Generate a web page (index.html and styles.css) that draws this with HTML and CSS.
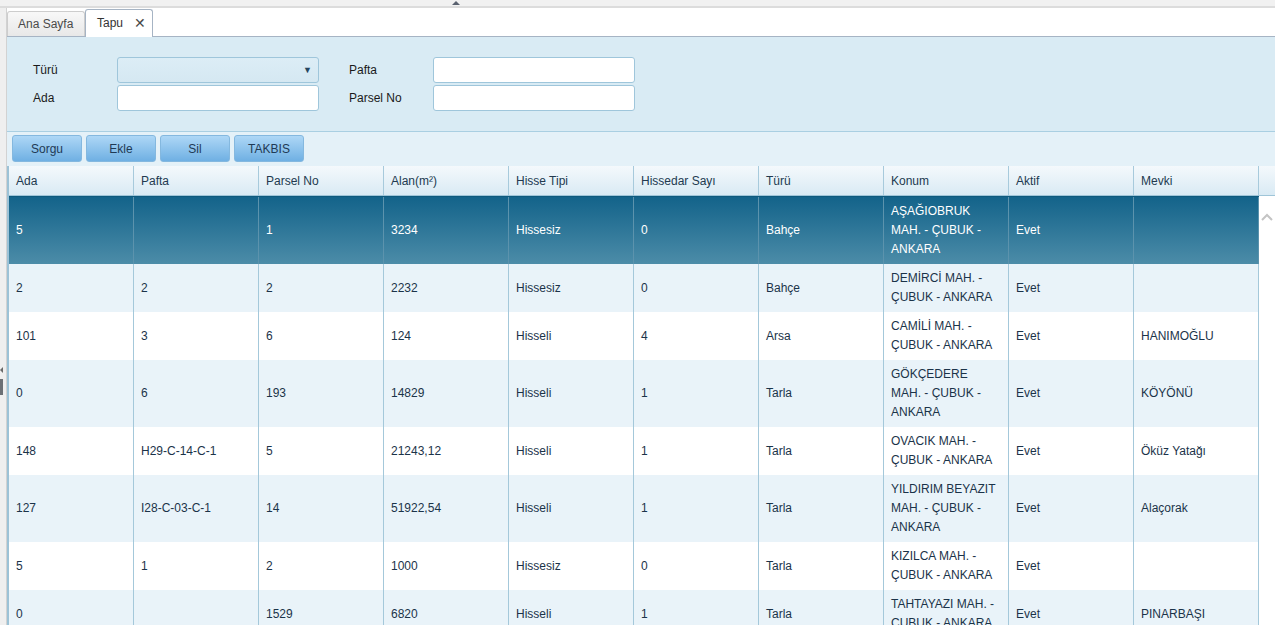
FILE: index.html
```html
<!DOCTYPE html>
<html lang="tr">
<head>
<meta charset="utf-8">
<title>Tapu</title>
<link rel="stylesheet" href="styles.css">
</head>
<body>
<div class="topbar"><span class="topbar-arrow"></span></div>
<div class="main">
  <div class="leftstrip"><span class="ls-arrow"></span><span class="ls-handle"></span></div>
  <div class="content">
    <div class="tabbar">
      <div class="tab">Ana Sayfa</div>
      <div class="tab active">Tapu <span class="close">✕</span></div>
    </div>
    <div class="panel">
      <div class="form">
        <div class="form-grid">
          <label class="lbl">Türü</label>
          <div class="field select"><span class="caret">▼</span></div>
          <span></span>
          <label class="lbl">Pafta</label>
          <div class="field"></div>
          <label class="lbl">Ada</label>
          <div class="field"></div>
          <span></span>
          <label class="lbl">Parsel No</label>
          <div class="field"></div>
        </div>
      </div>
      <div class="toolbar">
        <button class="btn">Sorgu</button>
        <button class="btn">Ekle</button>
        <button class="btn">Sil</button>
        <button class="btn">TAKBIS</button>
      </div>
      <div class="grid">
        <div class="grid-head">
          <div class="hc">Ada</div><div class="hc">Pafta</div><div class="hc">Parsel No</div><div class="hc">Alan(m²)</div><div class="hc">Hisse Tipi</div><div class="hc">Hissedar Sayı</div><div class="hc">Türü</div><div class="hc">Konum</div><div class="hc">Aktif</div><div class="hc">Mevki</div><div class="hc spacer"></div>
        </div>
        <div class="grid-wrap">
          <div class="grid-body">
            <div class="row sel"><div class="c">5</div><div class="c"></div><div class="c">1</div><div class="c">3234</div><div class="c">Hissesiz</div><div class="c">0</div><div class="c">Bahçe</div><div class="c">AŞAĞIOBRUK MAH. - ÇUBUK - ANKARA</div><div class="c">Evet</div><div class="c"></div></div>
            <div class="row alt"><div class="c">2</div><div class="c">2</div><div class="c">2</div><div class="c">2232</div><div class="c">Hissesiz</div><div class="c">0</div><div class="c">Bahçe</div><div class="c">DEMİRCİ MAH. - ÇUBUK - ANKARA</div><div class="c">Evet</div><div class="c"></div></div>
            <div class="row"><div class="c">101</div><div class="c">3</div><div class="c">6</div><div class="c">124</div><div class="c">Hisseli</div><div class="c">4</div><div class="c">Arsa</div><div class="c">CAMİLİ MAH. - ÇUBUK - ANKARA</div><div class="c">Evet</div><div class="c">HANIMOĞLU</div></div>
            <div class="row alt"><div class="c">0</div><div class="c">6</div><div class="c">193</div><div class="c">14829</div><div class="c">Hisseli</div><div class="c">1</div><div class="c">Tarla</div><div class="c">GÖKÇEDERE MAH. - ÇUBUK - ANKARA</div><div class="c">Evet</div><div class="c">KÖYÖNÜ</div></div>
            <div class="row"><div class="c">148</div><div class="c">H29-C-14-C-1</div><div class="c">5</div><div class="c">21243,12</div><div class="c">Hisseli</div><div class="c">1</div><div class="c">Tarla</div><div class="c">OVACIK MAH. - ÇUBUK - ANKARA</div><div class="c">Evet</div><div class="c">Öküz Yatağı</div></div>
            <div class="row alt"><div class="c">127</div><div class="c">I28-C-03-C-1</div><div class="c">14</div><div class="c">51922,54</div><div class="c">Hisseli</div><div class="c">1</div><div class="c">Tarla</div><div class="c">YILDIRIM BEYAZIT MAH. - ÇUBUK - ANKARA</div><div class="c">Evet</div><div class="c">Alaçorak</div></div>
            <div class="row"><div class="c">5</div><div class="c">1</div><div class="c">2</div><div class="c">1000</div><div class="c">Hissesiz</div><div class="c">0</div><div class="c">Tarla</div><div class="c">KIZILCA MAH. - ÇUBUK - ANKARA</div><div class="c">Evet</div><div class="c"></div></div>
            <div class="row alt"><div class="c">0</div><div class="c"></div><div class="c">1529</div><div class="c">6820</div><div class="c">Hisseli</div><div class="c">1</div><div class="c">Tarla</div><div class="c">TAHTAYAZI MAH. - ÇUBUK - ANKARA</div><div class="c">Evet</div><div class="c">PINARBAŞI</div></div>
          </div>
          <div class="vscroll">
            <svg class="chev" width="12" height="8" viewBox="0 0 12 8"><polyline points="1,7 6,2 11,7" fill="none" stroke="#c4c4c4" stroke-width="2"/></svg>
          </div>
        </div>
      </div>
    </div>
  </div>
</div>
</body>
</html>
```

FILE: styles.css
```css
* { box-sizing: border-box; }
html, body { margin: 0; padding: 0; }
body {
  width: 1275px;
  height: 625px;
  overflow: hidden;
  font-family: "Liberation Sans", Arial, sans-serif;
  font-size: 12px;
  background: #ffffff;
}
.topbar {
  height: 8px;
  background: #f1f1f1;
  border-bottom: 2px solid #dcdcdc;
  display: flex;
  justify-content: flex-start;
}
.topbar-arrow {
  margin-top: 1px;
  margin-left: 452px;
  width: 0;
  height: 0;
  border-left: 4px solid transparent;
  border-right: 4px solid transparent;
  border-bottom: 4px solid #5a6270;
}
.main {
  display: flex;
  height: 617px;
}
.leftstrip {
  width: 7px;
  flex: none;
  background: #efefef;
  border-right: 1px solid #d2d2d2;
  display: flex;
  flex-direction: column;
  align-items: flex-start;
}
.ls-arrow {
  margin-top: 359px;
  width: 0;
  height: 0;
  border-top: 3px solid transparent;
  border-bottom: 3px solid transparent;
  border-right: 3px solid #6a6a6a;
}
.ls-handle {
  margin-top: 6px;
  width: 3px;
  height: 16px;
  background: #6c7075;
}
.content {
  flex: 1;
  display: flex;
  flex-direction: column;
  min-width: 0;
}
.tabbar {
  height: 29px;
  flex: none;
  border-bottom: 1px solid #a6b4c4;
  display: flex;
  align-items: flex-end;
  background: #ffffff;
}
.tab {
  height: 25px;
  width: 78px;
  padding-left: 10px;
  display: flex;
  align-items: center;
  color: #4a4a4a;
  background: linear-gradient(#f8f8f8, #e8e8e8);
  border: 1px solid #cdcdcd;
  border-bottom: none;
  border-radius: 3px 3px 0 0;
}
.tab.active {
  height: 28px;
  width: 68px;
  margin-bottom: -1px;
  padding-left: 11px;
  background: #ffffff;
  border-color: #a6b4c4;
  color: #333333;
  padding-bottom: 1px;
}
.tab .close {
  margin-left: 11px;
  font-size: 14px;
  color: #4a4a4a;
}
.panel {
  flex: 1;
  background: #d9ebf4;
  display: flex;
  flex-direction: column;
  min-height: 0;
}
.form {
  padding: 20px 0 20px 26px;
  border-bottom: 1px solid #a9cfe2;
}
.form-grid {
  display: grid;
  grid-template-columns: 84px 202px 30px 84px 202px;
  grid-template-rows: 26px 26px;
  row-gap: 2px;
  align-items: center;
}
.lbl {
  color: #1a1a1a;
  padding-bottom: 1px;
}
.field {
  height: 26px;
  background: #ffffff;
  border: 1px solid #9fc6db;
  border-radius: 3px;
}
.field.select {
  background: linear-gradient(#dcedf6, #d5e8f2);
  display: flex;
  align-items: center;
  justify-content: flex-end;
  padding-right: 6px;
}
.caret {
  font-size: 9px;
  color: #27465e;
}
.toolbar {
  height: 34px;
  flex: none;
  background: #e4f1f8;
  padding: 3px 0 0 5px;
  display: flex;
  gap: 4px;
  align-items: flex-start;
}
.btn {
  width: 70px;
  height: 27px;
  font-family: inherit;
  font-size: 12px;
  color: #1f3a55;
  border: 1px solid #84b8df;
  border-radius: 3px;
  background: linear-gradient(#aed7f6, #6fb0e3);
  padding: 0;
}
.grid {
  flex: 1;
  display: flex;
  flex-direction: column;
  min-height: 0;
  background: #ffffff;
  border-left: 2px solid #9cc2d6;
}
.grid-head {
  height: 30px;
  flex: none;
  display: grid;
  grid-template-columns: repeat(10, 125px) 1fr;
  background: linear-gradient(#f4f9fc, #d9eaf4);
  border-bottom: 1px solid #9fc5d8;
}
.hc {
  border-right: 1px solid #a7cadc;
  padding-left: 7px;
  display: flex;
  align-items: center;
  color: #223a50;
}
.hc.spacer { border-right: none; }
.grid-wrap {
  flex: 1;
  display: flex;
  min-height: 0;
  overflow: hidden;
}
.grid-body {
  width: 1250px;
  flex: none;
}
.row {
  display: grid;
  grid-template-columns: repeat(10, 125px);
  background: #ffffff;
  color: #1b3349;
}
.row.alt { background: #e9f3f9; }
.row.sel {
  background: linear-gradient(#13638a, #4c8ca8);
  border-top: 1px solid #0e5a7e;
  color: #ffffff;
}
.c {
  border-right: 1px solid #a4c8da;
  padding: 5px 10px 5px 7px;
  line-height: 19px;
  min-height: 48px;
  display: flex;
  align-items: center;
}
.row.sel .c { border-right-color: #5c93ad; }
.vscroll {
  flex: 1;
  background: #ffffff;
  display: flex;
  justify-content: center;
  align-items: flex-start;
  padding-top: 17px;
}
```
